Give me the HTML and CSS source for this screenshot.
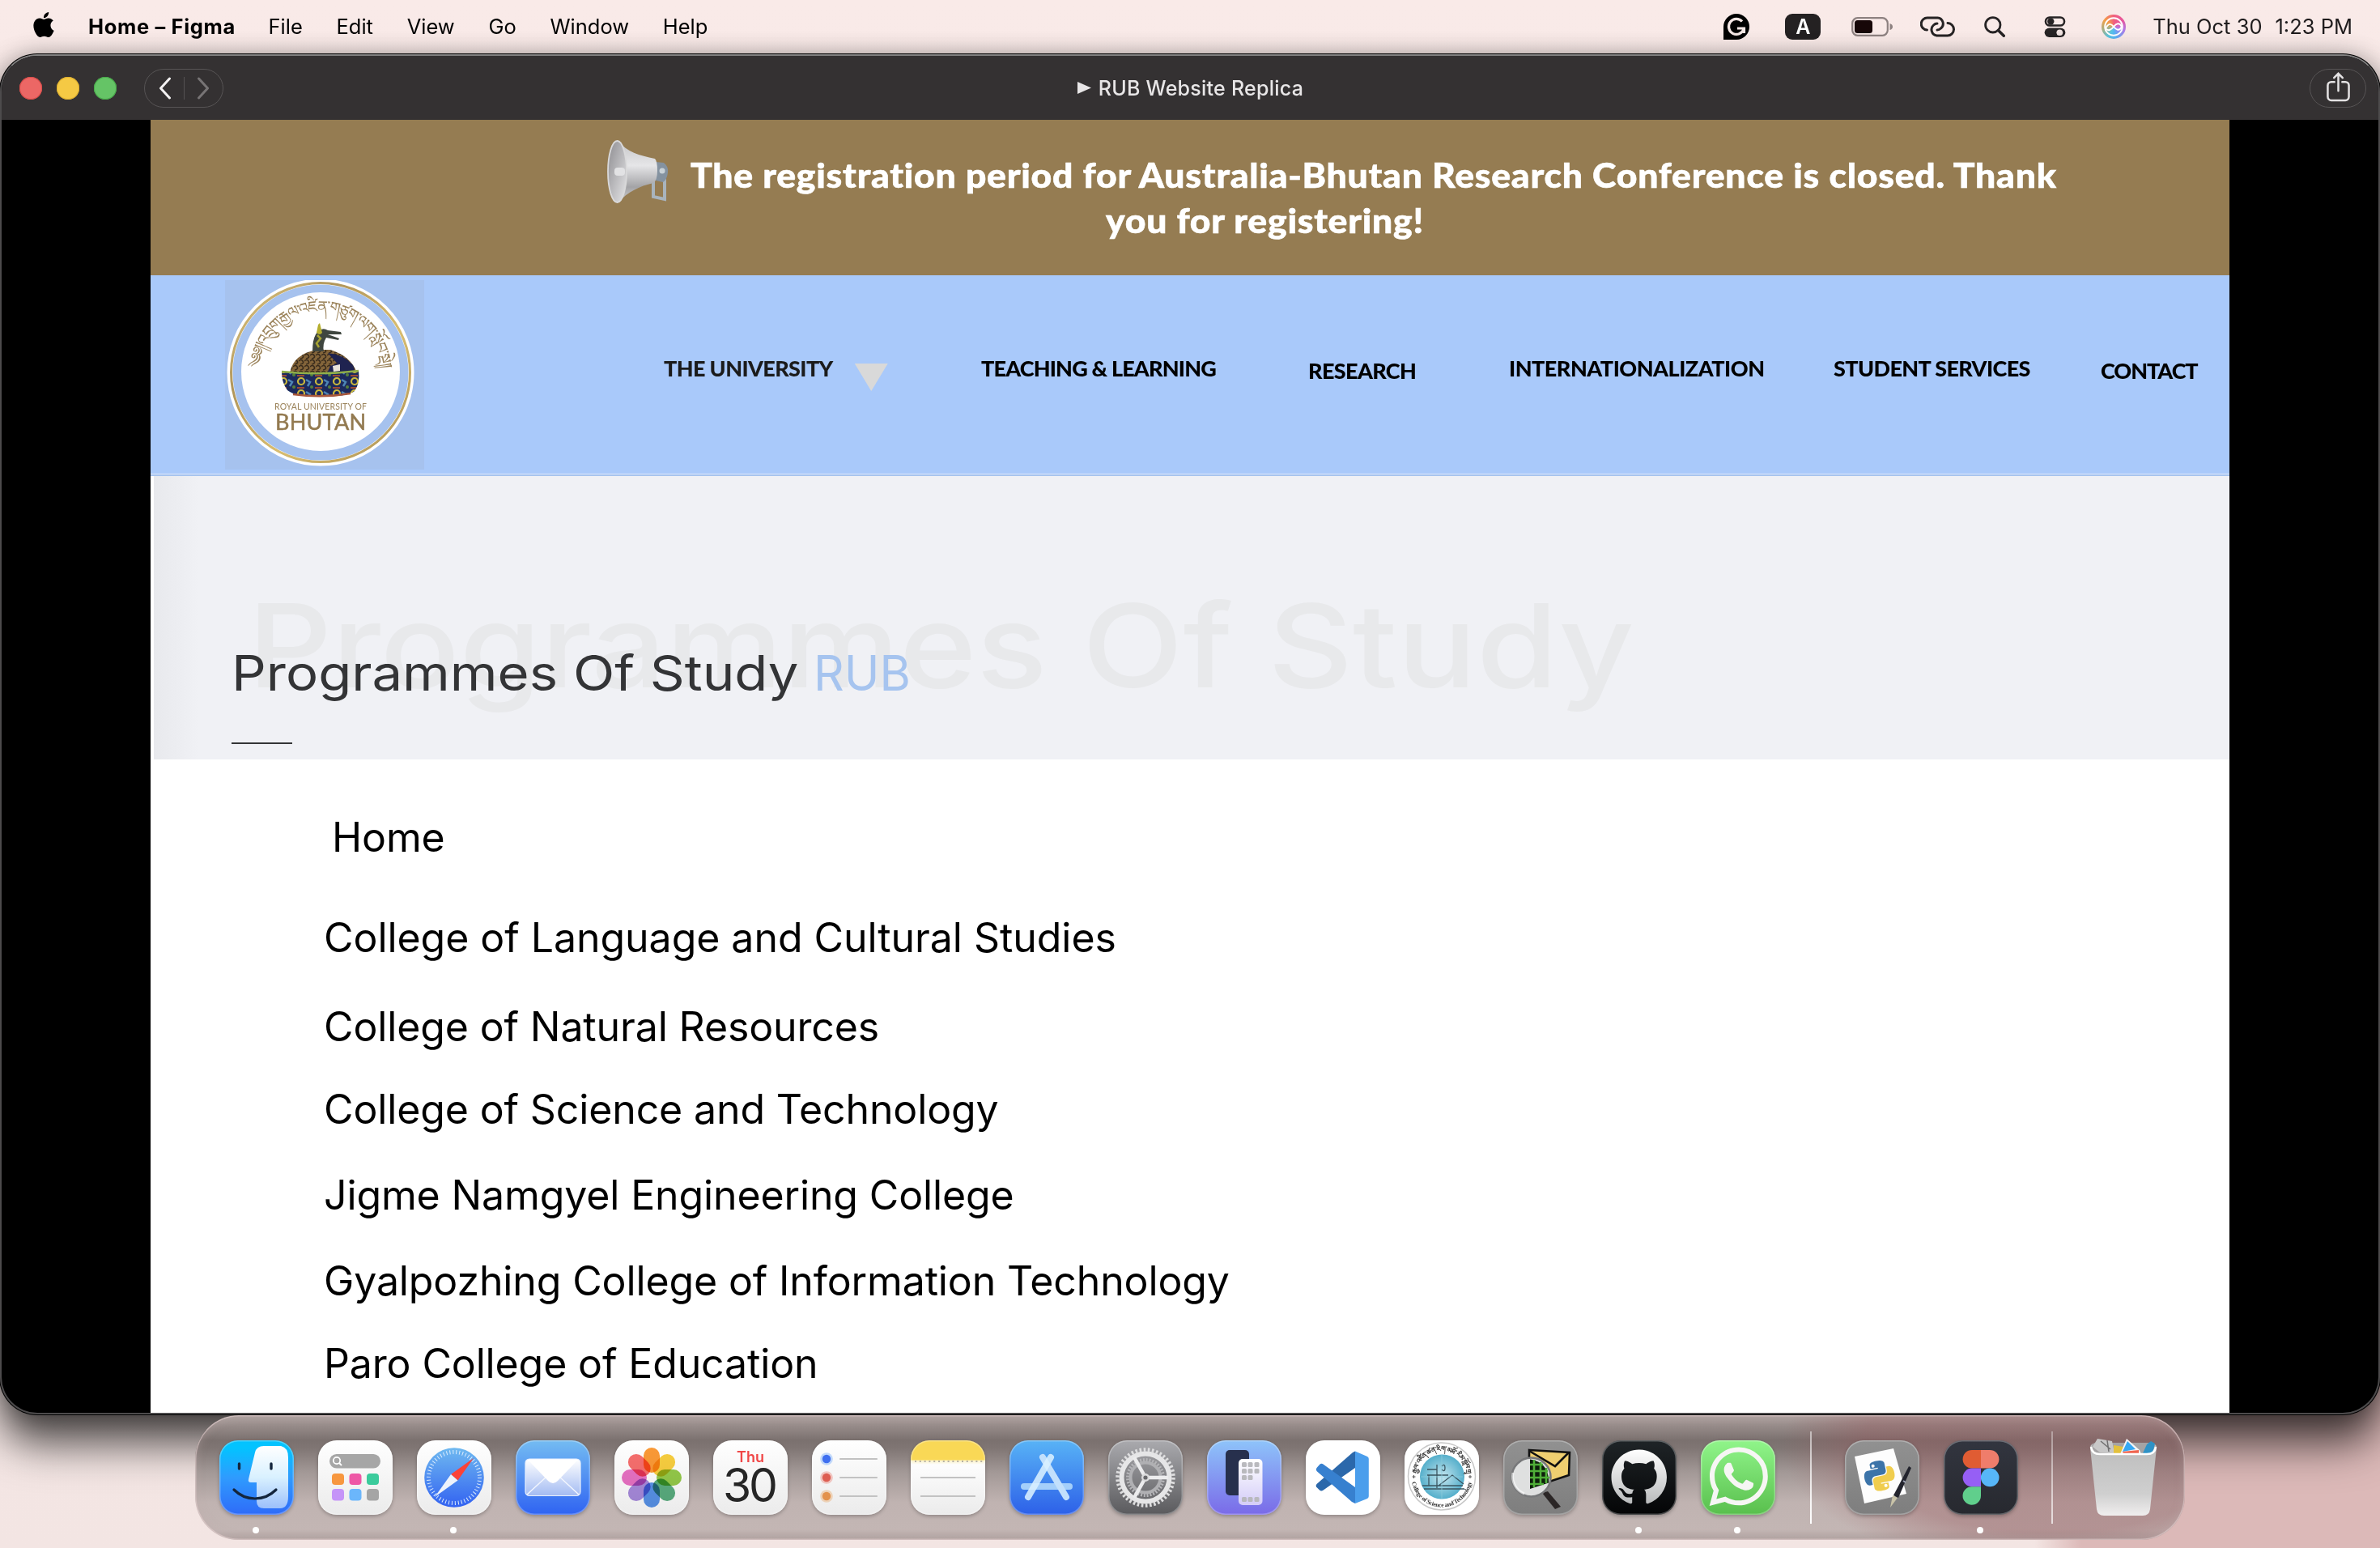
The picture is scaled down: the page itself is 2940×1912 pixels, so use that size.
FILE: index.html
```html
<!DOCTYPE html>
<html lang="en">
<head>
<meta charset="utf-8">
<title>RUB Website Replica</title>
<link rel="stylesheet" href="styles.css">
</head>
<body>
<div class="desktop">
  <header class="menubar">
    <svg class="apple" viewBox="2 0 20 24"><path d="M12.152 6.896c-.948 0-2.415-1.078-3.96-1.04-2.04.027-3.91 1.183-4.961 3.014-2.117 3.675-.546 9.103 1.519 12.09 1.013 1.454 2.208 3.09 3.792 3.039 1.52-.065 2.09-.987 3.935-.987 1.831 0 2.35.987 3.96.948 1.637-.026 2.676-1.48 3.676-2.948 1.156-1.688 1.636-3.325 1.662-3.415-.039-.013-3.182-1.221-3.22-4.857-.026-3.04 2.48-4.494 2.597-4.559-1.429-2.09-3.623-2.324-4.39-2.376-2-.156-3.675 1.09-4.61 1.09zM15.53 3.83c.843-1.012 1.4-2.427 1.245-3.83-1.207.052-2.662.805-3.532 1.818-.78.896-1.454 2.338-1.273 3.714 1.338.104 2.715-.688 3.559-1.701"/></svg>
    <nav class="menus">
      <span class="app">Home – Figma</span><span>File</span><span>Edit</span><span>View</span><span>Go</span><span>Window</span><span>Help</span>
    </nav>
    <div class="status">
      <svg class="st-grammarly" viewBox="0 0 32 32"><path d="M0 32V16A16 16 0 1 1 16 32Z"/><path d="M23 9.500A9.500 9.500 0 1 0 25 19M17 18h8.500v6" fill="none" stroke="#f4e7e5" stroke-width="3.200"/></svg>
      <span class="st-input">A</span>
      <svg class="st-battery" viewBox="0 0 52 24"><rect x="1.200" y="1.200" width="43.600" height="21.600" rx="6.500" fill="none" stroke="#8d8180" stroke-width="2.200"/><rect x="4" y="4" width="22" height="16" rx="3.500" fill="#170708"/><path d="M47.500 8v8q3.500-1 3.500-4t-3.500-4Z" fill="#8d8180"/></svg>
      <svg class="st-link" viewBox="0 0 42 26" fill="none" stroke="#262324" stroke-width="3" stroke-linecap="round"><path d="M8 17A7 7 0 0 1 8.500 2h12.500a7.300 7.300 0 0 1 4 13q-2 2-4.500 2"/><path d="M33.500 8.500a7.600 7.600 0 0 1-.500 15.500h-13a7.500 7.500 0 0 1-4-13q2-2 4.500-2"/></svg>
      <svg class="st-search" viewBox="0 0 26 26" fill="none" stroke="#262324" stroke-width="2.800" stroke-linecap="round"><circle cx="10.800" cy="10.800" r="9.200"/><path d="M17.500 17.500l6.800 6.800" stroke-width="3.400"/></svg>
      <svg class="st-control" viewBox="0 0 28 28"><rect x="2" y="2" width="24" height="10.500" rx="5.250" fill="none" stroke="#262324" stroke-width="2.600"/><circle cx="8.600" cy="7.250" r="4.300" fill="#262324"/><rect x=".7" y="15.500" width="26.600" height="12" rx="6" fill="#262324"/><circle cx="20" cy="21.500" r="4" fill="#efe2e0"/></svg>
      <span class="st-siri"><svg viewBox="0 0 30 30" fill="none" stroke="#fff" stroke-width="1.900"><circle cx="15" cy="15" r="10.800"/><path d="M5 17c4-7 7-6 10-2s7 6 10 0c-3-6-7-4-10 0s-7 6-10 2"/></svg></span>
      <span class="clock"><span>Thu Oct 30</span><span>1:23 PM</span></span>
    </div>
  </header>

  <section class="window">
    <div class="titlebar">
      <div class="lights"><i class="close"></i><i class="min"></i><i class="max"></i></div>
      <div class="pill">
        <svg viewBox="0 0 16 28"><path d="M13.500 2 2.500 14l11 12" stroke="#f3f1f2"/></svg>
        <b></b>
        <svg viewBox="0 0 16 28"><path d="M2.500 2l11 12-11 12" stroke="#777475"/></svg>
      </div>
      <h1 class="title"><svg viewBox="0 0 20 18"><path d="M1 1l18 8-18 8Z" fill="#e8e6e7"/></svg>RUB Website Replica</h1>
      <div class="share"><svg viewBox="0 0 30 38" fill="none" stroke="#e4e2e3" stroke-width="2.600" stroke-linecap="round"><path d="M10 12.500H6a4.500 4.500 0 0 0-4.500 4.500v14.500A4.500 4.500 0 0 0 6 36h18a4.500 4.500 0 0 0 4.500-4.500V17a4.500 4.500 0 0 0-4.500-4.500h-4M15 24V2M9.500 7.200 15 1.800l5.500 5.400"/></svg></div>
    </div>

    <main class="page">
      <div class="banner">
        <svg class="horn" viewBox="0 0 76 78">
          <defs>
            <linearGradient id="hornBody" x1="0" y1="0" x2="0" y2="1"><stop offset="0" stop-color="#c4c4c6"/><stop offset=".4" stop-color="#e6e6e8"/><stop offset=".75" stop-color="#a3a3a6"/><stop offset="1" stop-color="#d0d0d2"/></linearGradient>
            <linearGradient id="hornCup" x1="0" y1="0" x2="1" y2="1"><stop offset="0" stop-color="#8d8c90"/><stop offset="1" stop-color="#e5e5e7"/></linearGradient>
          </defs>
          <path d="M57 44v26l14 3V48" fill="none" stroke="#a9b4bd" stroke-width="4"/>
          <path d="M60 27l10 1q6 5 5 12-1 9-6 12l-9-2Z" fill="#8492a0"/>
          <path d="M14 1c10 14 26 18 45 22q3 3 3 15t-5 15C40 57 25 64 14 77Z" fill="url(#hornBody)"/>
          <ellipse cx="12.500" cy="39" rx="11.500" ry="38" fill="url(#hornCup)" stroke="#d9d9da" stroke-width="1.800"/>
          <rect x="9" y="34" width="13" height="10" rx="4" fill="#e2e2e4"/>
          <circle cx="68" cy="38" r="3.500" fill="#c9d2d8"/>
        </svg>
        <p class="banner-text"><span>The registration period for Australia-Bhutan Research Conference is closed. Thank</span><span class="second">you for registering!</span></p>
      </div>

      <div class="sitenav">
        <div class="logo">
          <svg viewBox="0 0 246 234">
            <defs>
              <path id="ringTop" d="M45 131A75 75 0 1 1 191 131"/>
              <linearGradient id="gold" x1="0" y1="0" x2="1" y2="1"><stop offset="0" stop-color="#e3cd86"/><stop offset=".3" stop-color="#b0955a"/><stop offset=".6" stop-color="#d8bd70"/><stop offset="1" stop-color="#a98f55"/></linearGradient>
              <pattern id="lotus" width="22" height="15" patternUnits="userSpaceOnUse"><rect width="22" height="15" fill="#1c2a5c"/><circle cx="6" cy="5" r="4" fill="none" stroke="#c9b83c" stroke-width="2.200"/><path d="M12 3l5 3-3 5" fill="none" stroke="#4d85b5" stroke-width="2.500"/><path d="M1 13h9" stroke="#9c4a35" stroke-width="2"/><circle cx="19" cy="12" r="2" fill="#55803c"/></pattern>
              <pattern id="hair" width="7" height="7" patternUnits="userSpaceOnUse"><rect width="7" height="7" fill="#84653a"/><path d="M0 2q3-3 5 0t-3 4" stroke="#3a2c1c" stroke-width="1.600" fill="none"/></pattern>
            </defs>
            <circle cx="118" cy="114" r="112" fill="none" stroke="#fff" stroke-width="7"/>
            <circle cx="118" cy="114" r="110.500" fill="none" stroke="url(#gold)" stroke-width="3"/>
            <circle cx="118" cy="113" r="98" fill="#fff"/>
            <text class="seal-script"><textPath href="#ringTop" startOffset="50%" text-anchor="middle" textLength="226">༄༅།།འབྲུག་རྒྱལ་འཛིན་གཙུག་ལག་སློབ་སྡེ།།</textPath></text>
            <path d="M80 115q4-24 34-29l16 0q26 8 33 29Z" fill="url(#hair)"/>
            <path d="M127 90q20 2 31 15l3 10h-35l4-9 9-3-5-5Z" fill="#1f2350"/>
            <path d="M133 106l9-2v8l-8 1Z" fill="#e9e3da"/>
            <path d="M108 88q0-14 4-21l3-4q6-5 12-1l16 2 1 3-17 0 14 5-1 2-15-3q-5 8-3 17Z" fill="#3f463f"/>
            <path d="M113 65l2-10 2-2 3 12q-3 4-7 0Z" fill="#b5ae2e"/>
            <path d="M114 68l4 4-5 6 3 5" fill="none" stroke="#a7a432" stroke-width="2.500"/>
            <path d="M70 113q48 5 95-1 2 15-5 25-8 7-42 7-38 0-43-11-5-8-5-20Z" fill="url(#lotus)"/>
            <path d="M70 113q48 5 95-1" fill="none" stroke="#8fae4a" stroke-width="2.500"/>
            <path d="M84 141q36 5 71-1" fill="none" stroke="#a9573b" stroke-width="2.500"/>
            <text class="seal-small" x="118" y="160" text-anchor="middle" textLength="114">ROYAL UNIVERSITY OF</text>
            <text class="seal-big" x="118" y="184.500" text-anchor="middle" textLength="112">BHUTAN</text>
          </svg>
        </div>
        <ul class="links">
          <li class="uni">THE UNIVERSITY<i class="caret"></i></li>
          <li class="teach">TEACHING &amp; LEARNING</li>
          <li class="low">RESEARCH</li>
          <li class="intl">INTERNATIONALIZATION</li>
          <li>STUDENT SERVICES</li>
          <li class="low contact">CONTACT</li>
        </ul>
      </div>

      <div class="hero">
        <p class="ghost">Programmes Of Study</p>
        <div class="hero-title"><h2>Programmes Of Study <em>RUB</em></h2><hr></div>
      </div>

      <ul class="colleges">
        <li class="home">Home</li>
        <li>College of Language and Cultural Studies</li>
        <li>College of Natural Resources</li>
        <li>College of Science and Technology</li>
        <li>Jigme Namgyel Engineering College</li>
        <li>Gyalpozhing College of Information Technology</li>
        <li>Paro College of Education</li>
      </ul>
    </main>
  </section>

  <footer class="dock">
    <div class="tile finder on"><svg viewBox="0 0 92 92"><defs><linearGradient id="face" x1="0" y1="0" x2="0" y2="1"><stop offset="0" stop-color="#fff"/><stop offset=".5" stop-color="#d9f1ff"/><stop offset="1" stop-color="#9cc0fb"/></linearGradient></defs><path d="M55 7h21q9 2 9 14v48q0 15-10 15H55q-9 0-9-9V52H39q-4 0-3-4l8-33q2-8 11-8Z" fill="url(#face)"/><path d="M24.500 29v6M64 29v6" stroke="#14253c" stroke-width="3.400" stroke-linecap="round"/><path d="M18 61q11 11 26 11t26-11" fill="none" stroke="#14253c" stroke-width="3.200" stroke-linecap="round"/></svg></div>

    <div class="tile light"><svg viewBox="0 0 92 92"><rect x="14" y="17" width="63" height="17.500" rx="8.700" fill="#a6a6a6"/><circle cx="23" cy="25" r="4.200" fill="none" stroke="#fff" stroke-width="1.800"/><path d="M26 28l3 3" stroke="#fff" stroke-width="1.800"/><rect x="17" y="41" width="15" height="14" rx="4" fill="#f7973f"/><rect x="38.500" y="41" width="15" height="14" rx="4" fill="#ee58a6"/><rect x="60" y="41" width="15" height="14" rx="4" fill="#3bcb9c"/><rect x="17" y="60" width="15" height="14.500" rx="4" fill="#c594f8"/><rect x="38.500" y="60" width="15" height="14.500" rx="4" fill="#6bb6fb"/><rect x="60" y="60" width="15" height="14.500" rx="4" fill="#a5a5a5"/></svg></div>

    <div class="tile light on"><svg viewBox="0 0 92 92"><defs><linearGradient id="saf" x1="0" y1="0" x2="0" y2="1"><stop offset="0" stop-color="#6fb9f0"/><stop offset="1" stop-color="#3262f1"/></linearGradient></defs><circle cx="46" cy="46" r="36.800" fill="url(#saf)"/><circle cx="46" cy="46" r="31.500" fill="none" stroke="#dcecfd" stroke-width="5" stroke-dasharray="1 2.960"/><path d="M70 22 50.500 49.500 42 42Z" fill="#fb4238"/><path d="M22 70 42 42l8.500 7.500Z" fill="#eef3fb"/></svg></div>

    <div class="tile mail"><svg viewBox="0 0 92 92"><defs><linearGradient id="env" x1="0" y1="0" x2="0" y2="1"><stop offset="0" stop-color="#fff"/><stop offset="1" stop-color="#a3bbf2"/></linearGradient></defs><rect x="12" y="23" width="68" height="45.500" rx="5" fill="url(#env)" stroke="#e8f0fd" stroke-width="1.200"/><path d="M14 67l25-23M78 67 53 44" stroke="#f1f5fe" stroke-width="1.600"/><path d="M15 24h62L52 50q-6 6-12 0Z" fill="#fff"/></svg></div>

    <div class="tile light"><svg viewBox="0 0 92 92"><g class="petals"><rect x="36" y="9" width="20" height="31" rx="10" fill="#fb9226"/><rect x="36" y="9" width="20" height="31" rx="10" fill="#f8cb30" transform="rotate(45 46 46)"/><rect x="36" y="9" width="20" height="31" rx="10" fill="#8cc63b" transform="rotate(90 46 46)"/><rect x="36" y="9" width="20" height="31" rx="10" fill="#4da876" transform="rotate(135 46 46)"/><rect x="36" y="9" width="20" height="31" rx="10" fill="#4b8be8" transform="rotate(180 46 46)"/><rect x="36" y="9" width="20" height="31" rx="10" fill="#a182db" transform="rotate(225 46 46)"/><rect x="36" y="9" width="20" height="31" rx="10" fill="#e866c0" transform="rotate(270 46 46)"/><rect x="36" y="9" width="20" height="31" rx="10" fill="#f76463" transform="rotate(315 46 46)"/></g></svg></div>

    <div class="tile light calendar"><span class="dow">Thu</span><span class="day">30</span></div>

    <div class="tile light"><svg viewBox="0 0 92 92"><g fill-opacity=".35"><circle cx="18" cy="23" r="7.800" fill="#5a9bf8"/><circle cx="18" cy="46" r="7.800" fill="#e8695c"/><circle cx="18" cy="69" r="7.800" fill="#e79a51"/></g><circle cx="18" cy="23" r="5.200" fill="#3f6ff0"/><circle cx="18" cy="46" r="5.200" fill="#dd5e52"/><circle cx="18" cy="69" r="5.200" fill="#e3924d"/><path d="M35 23h45M35 46h45M35 69h45" stroke="#c2c2c2" stroke-width="2.200" stroke-linecap="round"/></svg></div>

    <div class="tile notes"><svg viewBox="0 0 92 92"><path d="M5 26h84" stroke="#b5b0a5" stroke-width="2" stroke-dasharray="2 3.800"/><path d="M12 46h68M12 69h68" stroke="#c2c2c2" stroke-width="2.200"/></svg></div>

    <div class="tile store"><svg viewBox="0 0 92 92" stroke-linecap="round" stroke-width="8"><path d="M18 57h56" stroke="#a4cffa"/><path d="M41 21l29 49" stroke="#c2e0fc"/><path d="M51 21 23 70" stroke="#d9f0ff" stroke-opacity=".88"/></svg></div>

    <div class="tile settings"><svg viewBox="0 0 92 92" fill="none"><circle cx="46" cy="46" r="34.500" stroke="#dededf" stroke-width="4.500" stroke-dasharray="2.600 2.560"/><circle cx="46" cy="46" r="29.500" stroke="#e6e6e7" stroke-width="6"/><circle cx="46" cy="46" r="22" stroke="#b5b5b8" stroke-width="4" stroke-dasharray="2 1.840"/><circle cx="46" cy="46" r="18.500" stroke="#b0b0b3" stroke-width="4"/><path d="M46 46h28M46 46 32 21M46 46 32 71" stroke="#ececed" stroke-width="4.500"/><circle cx="46" cy="46" r="5" fill="#dcdcdd"/><circle cx="46" cy="46" r="2.600" fill="#68686b"/></svg></div>

    <div class="tile mirror"><svg viewBox="0 0 92 92"><defs><linearGradient id="phone" x1="0" y1="0" x2="0" y2="1"><stop offset="0" stop-color="#fff"/><stop offset="1" stop-color="#d4cdf8"/></linearGradient></defs><rect x="23" y="12" width="29" height="56" rx="5" fill="#27304d"/><rect x="39" y="23" width="29.500" height="57" rx="5" fill="url(#phone)"/><g fill="#b9b9be"><rect x="43" y="27" width="6" height="6" rx="1.500"/><rect x="50.500" y="27" width="6" height="6" rx="1.500"/><rect x="58.500" y="27" width="6" height="6" rx="1.500"/><rect x="43" y="35" width="6" height="6" rx="1.500"/><rect x="50.500" y="35" width="6" height="6" rx="1.500"/><rect x="58.500" y="35" width="6" height="6" rx="1.500"/><rect x="43" y="43" width="6" height="6" rx="1.500"/><rect x="50.500" y="43" width="6" height="6" rx="1.500"/><rect x="43" y="70" width="6" height="6" rx="1.500"/><rect x="50.500" y="70" width="6" height="6" rx="1.500"/><rect x="58.500" y="70" width="6" height="6" rx="1.500"/></g></svg></div>

    <div class="tile white"><svg viewBox="0 0 92 92"><path d="M61 13.500V34L21 62q-2 1-4-.5l-4-4q-1-2 .5-3.500L58 15Z" fill="#2b68ab"/><path d="M17.500 29.500q2-1.500 4 0L61 58v20l-4-2L13.500 38q-1.500-2 0-4Z" fill="#3780cf"/><path d="M61 13.500l15 6.500q1.800 1 1.800 3v46q0 2-1.800 3L61 78Z" fill="#4b9eec"/></svg></div>

    <div class="tile white"><svg viewBox="0 0 92 92"><defs><path id="cstArc" d="M8.500 45A37.500 37.500 0 0 0 83.500 45"/><path id="cstTop" d="M16 52A31 31 0 1 1 76 52"/><radialGradient id="globe"><stop offset="0" stop-color="#c5e6ef"/><stop offset="1" stop-color="#55afcb"/></radialGradient></defs><circle cx="46" cy="44.500" r="41.500" fill="#fff" stroke="#c8c8c8" stroke-width="1.500"/><circle cx="46.500" cy="45" r="27.500" fill="url(#globe)"/><path d="M40 30v29M28 43h26M28 36h12M22 56h50M24 60h50M42 56l17-13 14 11M46 32q4-4 4 2t-4 2M30 43v13" fill="none" stroke="#3a5560" stroke-width="1.300"/><path d="M20 45h52M46 18v54" stroke="#8ccbdc" stroke-width=".8"/><text class="cst-top"><textPath href="#cstTop" startOffset="50%" text-anchor="middle" textLength="92">རྒྱལ་འཛིན་ཚན་རིག་མཐོ་རིམ་སློབ་གྲྭ</textPath></text><text class="cst"><textPath href="#cstArc" startOffset="50%" text-anchor="middle" textLength="104">College of Science and Technology</textPath></text><path d="M9.500 45h4M11.500 43v4M79 45h4M81 43v4" stroke="#555"/></svg></div>

    <div class="tile gray"><svg viewBox="0 0 92 92"><path d="M32 12l50 3-1 28-24 8-25-7Z" fill="#efcf70" stroke="#111" stroke-width="2.600"/><path d="M32 13l32 19 17-17" fill="none" stroke="#111" stroke-width="2.600"/><path d="M48 65l7-2 16 19-7 3Z" fill="#2b2626"/><circle cx="34.500" cy="45.500" r="24" fill="#dfe0e0" stroke="#77787a" stroke-width="2.500"/><path d="M33 23.500q21 3 23 24v5L33 60Z" fill="#0d1f0b"/><path d="M38 24v34M46 27v27M53 34v19M33 30h16M33 38h22M33 46h24M33 54h17" stroke="#4fae38" stroke-width="2.600"/><path d="M12 40a23 23 0 0 0 14 26" fill="none" stroke="#fff" stroke-opacity=".6" stroke-width="3"/></svg></div>

    <div class="tile github on"><svg viewBox="0 0 92 92"><defs><linearGradient id="gh" x1="0" y1="0" x2="0" y2="1"><stop offset="0" stop-color="#fff"/><stop offset="1" stop-color="#b9bbbc"/></linearGradient></defs><path transform="translate(11.500 11.500) scale(4.280)" fill="url(#gh)" d="M8 0C3.580 0 0 3.580 0 8c0 3.540 2.290 6.530 5.470 7.590.4.070.55-.17.55-.38 0-.19-.01-.82-.01-1.490-2.010.37-2.530-.49-2.690-.94-.09-.23-.48-.94-.82-1.130-.28-.15-.68-.52-.01-.53.63-.01 1.080.58 1.230.82.72 1.210 1.870.87 2.330.66.07-.52.28-.87.51-1.070-1.780-.2-3.640-.89-3.640-3.950 0-.87.31-1.590.82-2.150-.08-.2-.36-1.020.08-2.120 0 0 .67-.21 2.200.82.64-.18 1.320-.27 2-.27s1.360.09 2 .27c1.530-1.040 2.200-.82 2.200-.82.44 1.100.16 1.920.08 2.120.51.56.82 1.270.82 2.150 0 3.070-1.870 3.750-3.650 3.950.29.25.54.73.54 1.480 0 1.070-.01 1.930-.01 2.200 0 .21.15.46.55.38A8.010 8.010 0 0 0 16 8c0-4.420-3.580-8-8-8Z"/></svg></div>

    <div class="tile whatsapp on"><svg viewBox="0 0 92 92"><path transform="translate(10.500 8.500) scale(3.020)" fill="#f6f6f4" d="M17.472 14.382c-.297-.149-1.758-.867-2.030-.967-.273-.099-.471-.148-.67.15-.197.297-.767.966-.94 1.164-.173.199-.347.223-.644.075-.297-.15-1.255-.463-2.390-1.475-.883-.788-1.480-1.761-1.653-2.059-.173-.297-.018-.458.13-.606.134-.133.298-.347.446-.52.149-.174.198-.298.298-.497.099-.198.05-.371-.025-.52-.075-.149-.669-1.612-.916-2.207-.242-.579-.487-.5-.669-.51-.173-.008-.371-.01-.57-.01-.198 0-.52.074-.792.372-.272.297-1.040 1.016-1.040 2.479 0 1.462 1.065 2.875 1.213 3.074.149.198 2.096 3.200 5.077 4.487.709.306 1.262.489 1.694.625.712.227 1.360.195 1.871.118.571-.085 1.758-.719 2.006-1.413.248-.694.248-1.289.173-1.413-.074-.124-.272-.198-.57-.347m-5.421 7.403h-.004a9.870 9.870 0 0 1-5.031-1.378l-.361-.214-3.741.982.998-3.648-.235-.374a9.860 9.860 0 0 1-1.510-5.260c.001-5.450 4.436-9.884 9.888-9.884 2.640 0 5.122 1.030 6.988 2.898a9.825 9.825 0 0 1 2.893 6.994c-.003 5.450-4.437 9.884-9.885 9.884m8.413-18.297A11.815 11.815 0 0 0 12.050 0C5.495 0 .16 5.335.157 11.892c0 2.096.547 4.142 1.588 5.945L.057 24l6.305-1.654a11.882 11.882 0 0 0 5.683 1.448h.005c6.554 0 11.890-5.335 11.893-11.893a11.821 11.821 0 0 0-3.480-8.413z"/></svg></div>

    <i class="sep"></i>

    <div class="tile gray"><svg viewBox="0 0 92 92"><defs><path id="snake" d="M14.250.18l.9.2.73.26.59.3.45.32.34.34.25.34.16.33.1.3.04.26.02.2-.01.13V8.500l-.05.63-.13.55-.21.46-.26.38-.3.31-.33.25-.35.19-.35.14-.33.1-.3.07-.26.04-.21.02H8.770l-.69.05-.59.14-.5.22-.41.27-.33.32-.27.35-.2.36-.15.37-.1.35-.07.32-.04.27-.02.21v3.060H3.170l-.21-.03-.28-.07-.32-.12-.35-.18-.36-.26-.36-.36-.35-.46-.32-.59-.28-.73-.21-.88-.14-1.050-.05-1.230.06-1.220.16-1.040.24-.87.32-.71.36-.57.4-.44.42-.33.42-.24.4-.16.36-.1.32-.05.24-.01h.16l.06.01h8.160v-.83H6.180l-.01-2.750-.02-.37.05-.34.11-.31.17-.28.25-.26.31-.23.38-.2.44-.18.51-.15.58-.12.64-.1.71-.06.77-.04.84-.02 1.270.05z"/></defs><path d="M12 20 60 10l16 56-52 12Z" fill="#fdfdfd"/><g transform="rotate(-12 43 44) translate(24 25) scale(1.560)"><use href="#snake" fill="#3c74a9"/><use href="#snake" fill="#f0cd4e" transform="rotate(180 12 12)"/><circle cx="8.600" cy="3.400" r="1.300" fill="#fff"/><circle cx="15.400" cy="20.600" r="1.300" fill="#fff"/></g><path d="M79 32l3 2-16 37-6-3Z" fill="#23242d"/><path d="M59 68l6 3-9 12Z" fill="#c9c3a8"/><path d="M72 50l3 2" stroke="#9fa6b8" stroke-width="2"/></svg></div>

    <div class="tile figma on"><svg viewBox="0 0 92 92"><path d="M46 12v22.600H34.900a11.300 11.300 0 0 1 0-22.600Z" fill="#e05c33"/><path d="M46 12h11.100a11.300 11.300 0 0 1 0 22.600H46Z" fill="#ef7d6b"/><path d="M46 34.600v22.600H34.900a11.300 11.300 0 0 1 0-22.600Z" fill="#965ff5"/><circle cx="57.200" cy="45.900" r="11.300" fill="#57b6f8"/><path d="M46 57.200v11.300a11.250 11.250 0 1 1-11.100-11.300Z" fill="#60cf8c"/></svg></div>

    <i class="sep two"></i>

    <svg class="trash" viewBox="0 0 84 98"><defs><linearGradient id="bin" x1="0" y1="0" x2="0" y2="1"><stop offset="0" stop-color="#bcbcbc"/><stop offset=".7" stop-color="#cfcfcf"/><stop offset="1" stop-color="#f0eeee"/></linearGradient></defs><path d="M1 12q0-5 8-6h66q8 1 8 6l-8 76q-1 8-9 8H18q-8 0-9-8Z" fill="url(#bin)"/><path d="M3 10q0-4 8-4h62q8 0 8 4t-8 9H12q-9-1-9-9Z" fill="#a5a3a4"/><path d="M10 1l18 3 3 15-18-1-9-7Z" fill="#c8c8c8"/><path d="M14 4l12 10M22 3l2 14" stroke="#6f6f6f" stroke-width="1.500"/><path d="M30 9l12 2-4 9-8-1Z" fill="#e3c13d"/><path d="M46 1l16 14 2 5H38Z" fill="#f6f4f5"/><path d="M47 4l10 10-16 3Z" fill="#35a8f4"/><path d="M41 17l20-2v4H42Z" fill="#f0644f"/><path d="M76 4l5 3-3 12H66l5-11Z" fill="#2f92c6"/><path d="M2 11q1 9 11 9h58q10 0 11-9" fill="none" stroke="#fff" stroke-width="2.500"/></svg>
  </footer>
</div>
</body>
</html>
```
FILE: styles.css
```css
* { box-sizing: border-box; }
body { margin: 0; font-family: Inter, "Liberation Sans", sans-serif; color: #000; }
ul, h1, h2, p { margin: 0; padding: 0; font: inherit; list-style: none; }
svg { display: block; flex: none; }

.desktop {
  width: 2940px; height: 1912px; overflow: hidden;
  display: flex; flex-direction: column;
  background:
    radial-gradient(ellipse 480px 900px at 2990px 1800px, #dcb9b8 88%, rgba(220,185,184,0) 100%),
    linear-gradient(#f9eae8, #f3e5e3);
}

/* menu bar */
.menubar { height: 67px; flex: none; display: flex; align-items: center; padding: 0 34px 2px 41px; font-size: 25.500px; white-space: nowrap; }
.apple { width: 26px; height: 31px; margin-top: -4px; }
.menus { display: flex; gap: 41.700px; margin-left: 42px; }
.app { font-weight: 700; margin-right: -1px; letter-spacing: .65px; }
.status { margin-left: auto; display: flex; align-items: center; color: #1f1c1d; }
.st-grammarly { width: 32px; height: 32px; }
.st-input { width: 44px; height: 32px; margin-left: 44px; border-radius: 9px; background: #242122; color: #fff; font-weight: 600; font-size: 25px; line-height: 33px; text-align: center; }
.st-battery { width: 52px; height: 24px; margin-left: 38px; }
.st-link { width: 43px; height: 26px; margin-left: 33px; }
.st-search { width: 26px; height: 26px; margin-left: 36px; }
.st-control { width: 27px; height: 28px; margin-left: 48px; }
.st-siri { width: 30px; height: 30px; margin-left: 44px; border-radius: 50%; background: conic-gradient(#f0607c, #e8559c 15%, #b07be8 30%, #55b4f5 48%, #5bc6e0 58%, #a0b08a 70%, #f3a046 85%, #f0607c); }
.clock { display: flex; gap: 16px; margin-left: 33px; }

/* window */
.window {
  height: 1680px; flex: none; display: flex; flex-direction: column;
  border-radius: 46px; overflow: hidden; background: #000;
  border: 2px solid #4d4b4c; border-top-color: #828181;
  box-shadow: 0 0 0 1px #000, 0 0 28px rgba(0,0,0,.3), 0 36px 52px rgba(0,0,0,.68);
}
.titlebar { height: 79px; flex: none; display: flex; align-items: center; justify-content: space-between; padding: 0 15px 0 22px; background: #343132; position: relative; }
.lights { display: flex; gap: 18px; }
.lights i { width: 28px; height: 28px; border-radius: 50%; }
.close { background: #ec6765; box-shadow: inset 0 0 0 1px #d94b48; }
.min { background: #f5c944; box-shadow: inset 0 0 0 1px #dcae2e; }
.max { background: #65c466; box-shadow: inset 0 0 0 1px #47a949; }
.pill { width: 98px; height: 48px; margin-left: 34px; margin-right: auto; display: flex; align-items: center; justify-content: center; gap: 15px; border: 1.500px solid #575455; border-radius: 24px; }
.pill svg { width: 16px; height: 28px; fill: none; stroke-width: 3; stroke-linecap: round; stroke-linejoin: round; }
.pill b { width: 1px; height: 28px; background: #555253; }
.title { position: absolute; left: 0; right: 0; display: flex; justify-content: center; align-items: center; gap: 8px; color: #e8e6e7; font-size: 25px; font-weight: 500; letter-spacing: .25px; }
.title svg { width: 19px; height: 17px; }
.share { width: 70px; height: 48px; border: 1.500px solid #575455; border-radius: 24px; display: flex; align-items: center; justify-content: center; padding-bottom: 2px; }
.share svg { width: 29px; height: 37px; }

/* site */
.page { flex: 1; margin: 0 184px; background: #fff; overflow: hidden; }
.banner { height: 192px; display: flex; padding: 25px 0 0 564px; background: #957c52; }
.horn { width: 76px; height: 78px; }
.banner-text { margin: 15px 0 0 27px; font: 900 42px/56px Lato, sans-serif; color: #fff; white-space: nowrap; letter-spacing: .720px; transform: scaleX(1.06); transform-origin: 0 0; -webkit-text-stroke: .6px #fff; }
.banner-text span { display: block; }
.second { padding-left: 484px; }

.sitenav { height: 248px; display: flex; padding: 6px 0 0 92px; background: #a9c9fa; box-shadow: inset 0 -2px #a7c4ef, inset 0 -3px #dfe9fb; }
.logo { width: 246px; height: 234px; background: #a6c2ee; }
.logo svg { width: 246px; height: 234px; }
.seal-script { font-size: 19px; fill: #9b835a; }
.seal-small { font: 10.500px Lato, sans-serif; fill: #9b835a; }
.seal-big { font: 27px Lato, sans-serif; fill: #937a50; stroke: #937a50; stroke-width: .5px; }
.links { display: grid; grid-template-columns: 392px 404px 248px 401px 330px 120px; margin-left: 296px; padding-top: 92px; font: 900 27px/34px Lato, sans-serif; letter-spacing: -.62px; white-space: nowrap; }
.uni { display: flex; gap: 27px; color: #1b1b1b; }
.caret { width: 41px; height: 34px; margin-top: 11px; background: #d9d9d9; clip-path: polygon(0 0, 100% 0, 50% 100%); }
.low { padding-top: 3px; }
.teach { letter-spacing: -.82px; }
.intl { letter-spacing: -.5px; }
.contact { letter-spacing: -1.050px; }

.hero { height: 350px; margin-left: 4px; display: grid; background: linear-gradient(90deg, #e8e9ed, #f0f1f5 56px); }
.ghost { grid-area: 1 / 1; justify-self: start; margin: 119px 0 0 116px; height: 180px; font-size: 143px; line-height: 180px; font-weight: 500; color: #e8e9eb; white-space: nowrap; transform: scaleX(1.135); transform-origin: 0 0; }
.hero-title { grid-area: 1 / 1; padding: 203px 0 0 96px; }
.hero-title h2 { width: max-content; font-size: 60.500px; line-height: 80px; color: #333436; white-space: nowrap; transform: scaleX(1.108); transform-origin: 0 0; }
.hero-title em { display: inline-block; font-style: normal; color: #a6c4ef; transform: scaleX(.875); transform-origin: 0 0; }
.hero-title hr { width: 75px; height: 2px; margin: 46px 0 0; border: 0; background: #333436; }

.colleges { padding: 66px 0 0 214px; font-size: 50px; line-height: 60px; letter-spacing: -.13px; white-space: nowrap; }
.home { padding-left: 10px; }
.colleges li:nth-child(2) { margin-top: 64px; letter-spacing: -.05px; }
.colleges li:nth-child(3) { margin-top: 50px; }
.colleges li:nth-child(4) { margin-top: 42px; }
.colleges li:nth-child(5) { margin-top: 46px; }
.colleges li:nth-child(6) { margin-top: 46px; }
.colleges li:nth-child(7) { margin-top: 42px; }

/* dock */
.dock {
  position: relative; width: 2458px; height: 154px; flex: none; margin: 1px auto 0; padding: 31px 0 0 30px;
  display: flex; gap: 30px; border-radius: 54px;
  background:
    radial-gradient(ellipse 330px 150px at 2290px 40px, rgba(150,85,90,.36) 70%, rgba(150,85,90,0) 100%),
    linear-gradient(#b0a4a2, #938886 10%, #7b716f 20%, #7f7573 26%, #a39997 46%, #c0b3b1 70%, #c3b6b4 92%, #aea19f);
  box-shadow: inset 0 0 0 1.500px rgba(230,210,210,.55), inset 0 0 12px rgba(190,170,170,.5);
}
.tile { position: relative; width: 92px; height: 92px; flex: none; border-radius: 23px; box-shadow: inset 0 0 0 1.500px rgba(255,255,255,.28), 0 2px 4px rgba(0,0,0,.25); }
.tile svg { width: 92px; height: 92px; }
.on::after { content: ""; position: absolute; left: 41px; top: 107px; width: 8px; height: 8px; border-radius: 50%; background: #fff; }
.light { background: linear-gradient(#fff, #ebebeb); }
.white { background: #fff; }
.gray { background: linear-gradient(#919191, #7e7e7e); }
.finder { background: linear-gradient(#03c3ff 10%, #2f9bfe 50%, #2f6bf8); }
.mail { background: linear-gradient(#74bcf2, #2f63f2); }
.notes { background: linear-gradient(#f9d856 24px, #fbf2c8 25px, #fdfdfd 30px, #ebebeb); }
.store { background: linear-gradient(#58b3f6, #2d60e8); }
.settings { background: linear-gradient(#aaaaae, #5a5a5d); }
.mirror { background: linear-gradient(#8ec4fa, #7a6ae8); }
.github { background: linear-gradient(#1f2427, #040506); }
.whatsapp { background: linear-gradient(#90f58a, #59bf4d); }
.figma { background: linear-gradient(#32353f, #27292f); }
.petals rect { mix-blend-mode: multiply; opacity: .93; }
.calendar { display: flex; flex-direction: column; align-items: center; }
.dow { margin-top: 10px; font-size: 18px; line-height: 22px; font-weight: 600; color: #f04747; }
.day { margin-left: -3px; font-size: 57px; line-height: 48px; letter-spacing: -3px; color: #262626; }
.cst { font: bold 7.500px "Liberation Serif", serif; fill: #333; }
.cst-top { font-size: 8px; fill: #333; stroke: #333; stroke-width: .3px; }
.sep { width: 2px; height: 114px; flex: none; margin: -11px 11px 0 13px; background: linear-gradient(rgba(255,255,255,.5), #fff); }
.sep.two { margin: -11px 15px 0 11px; opacity: .7; }
.trash { width: 84px; height: 98px; margin-top: -3px; }
```
